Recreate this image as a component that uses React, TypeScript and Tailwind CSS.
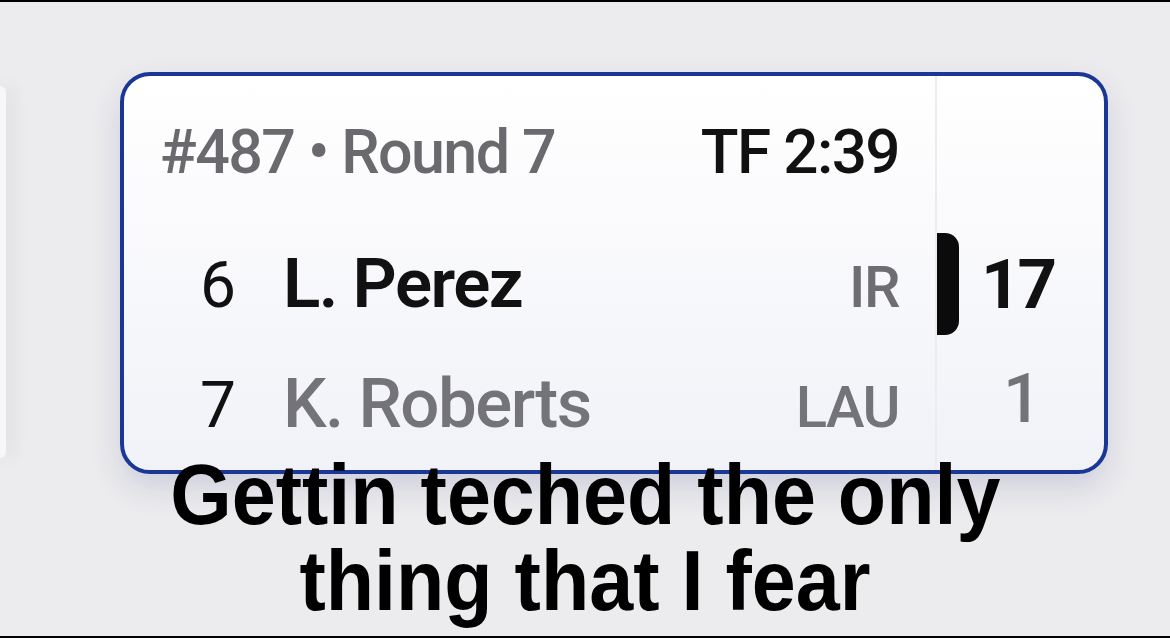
import React from "react";

export default function App() {
  return (
    <div className="relative w-[1170px] h-[638px] overflow-hidden bg-[#ececee] border-t-2 border-b-2 border-black" style={{ fontFamily: "Roboto, 'Noto Sans', sans-serif" }}>
      <div className="flex h-full items-start">
        {/* left edge card */}
        <div className="mt-[84px] h-[372px] w-[6px] rounded-r-[10px] bg-[#f7f7f9] shadow-[4px_0_18px_rgba(0,0,0,0.12)]" />
        {/* main card */}
        <div className="ml-[114px] mt-[70px] flex h-[402px] w-[988px] overflow-hidden rounded-[30px] border-[4px] border-[#1a3796] bg-gradient-to-b from-white to-[#f1f2f8] shadow-[0_14px_30px_rgba(40,50,120,0.15)]">
          <div className="flex w-[811px] flex-col pl-[36px] pr-[36px]">
            <div className="mt-[45px] flex items-baseline justify-between text-[61px] leading-none tracking-[-1.6px]">
              <span className="font-medium text-[#69696e]">#487 • Round 7</span>
              <span className="text-[62px] font-medium text-[#111]">TF 2:39</span>
            </div>
            <div className="mt-[66px] flex items-baseline text-[69px] leading-none tracking-[-1.5px]">
              <span className="w-[123px] pl-[40px] text-[64px] text-[#111]">6</span>
              <span className="font-semibold text-[#111]">L. Perez</span>
              <span className="ml-auto text-[58px] font-medium text-[#6d6d72]">IR</span>
            </div>
            <div className="mt-[51px] flex items-baseline text-[69px] leading-none tracking-[-1.5px]">
              <span className="w-[123px] pl-[40px] text-[64px] text-[#111]">7</span>
              <span className="font-medium text-[#737378]">K. Roberts</span>
              <span className="ml-auto text-[58px] font-medium text-[#737378]">LAU</span>
            </div>
          </div>
          <div className="flex flex-1 flex-col border-l-2 border-[#ececf0]">
            <div className="mt-[157px] flex h-[102px] items-center">
              <div className="h-[102px] w-[22px] rounded-r-[14px] bg-[#0b0b0b]" />
              <span className="ml-[22px] text-[69px] font-bold leading-none tracking-[-3px] text-[#111]">17</span>
            </div>
            <div className="mt-[30px] flex pl-[66px] text-[68px] font-medium leading-none text-[#737378]">1</div>
          </div>
        </div>
      </div>
      {/* caption overlay */}
      <div className="absolute left-0 right-0 top-[450px] flex flex-col items-center text-[85px] font-bold leading-[86px] text-black" style={{ fontFamily: "'Liberation Sans', Arial, sans-serif" }}>
        <span className="inline-block scale-x-[0.93] whitespace-nowrap">Gettin teched the only</span>
        <span className="inline-block scale-x-[0.93] whitespace-nowrap">thing that I fear</span>
      </div>
    </div>
  );
}
